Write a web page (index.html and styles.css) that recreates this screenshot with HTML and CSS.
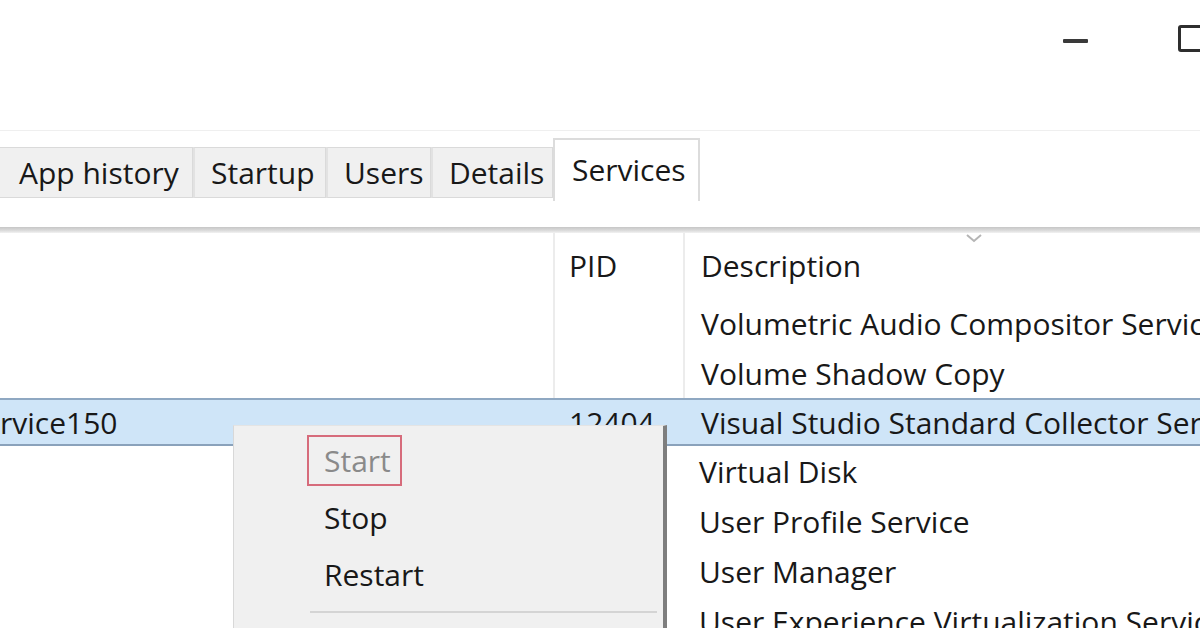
FILE: index.html
```html
<!DOCTYPE html>
<html>
<head>
<meta charset="utf-8">
<title>Task Manager - Services</title>
<link rel="stylesheet" href="styles.css">
</head>
<body>
<div class="window">
  <div class="titlebar">
    <div class="ctrl-min"><span class="dash"></span></div>
    <div class="ctrl-max"><span class="box"></span></div>
  </div>
  <div class="tabstrip">
    <div class="tab t-app">App history</div>
    <div class="tab t-startup">Startup</div>
    <div class="tab t-users">Users</div>
    <div class="tab t-details">Details</div>
    <div class="tab t-services active">Services</div>
  </div>
  <div class="gap"></div>
  <div class="headline"></div>
  <div class="grid">
    <div class="row head sep">
      <div class="cell name"></div>
      <div class="cell pid">PID</div>
      <div class="cell desc">Description
        <svg class="sort" width="16" height="9" viewBox="0 0 16 9"><polyline points="1,1 8,7 15,1" fill="none" stroke="#b5b5b5" stroke-width="2"/></svg>
      </div>
    </div>
    <div class="row sep">
      <div class="cell name"></div>
      <div class="cell pid"></div>
      <div class="cell desc">Volumetric Audio Compositor Service</div>
    </div>
    <div class="row sep">
      <div class="cell name"></div>
      <div class="cell pid"></div>
      <div class="cell desc">Volume Shadow Copy</div>
    </div>
    <div class="row selected">
      <div class="cell name clip">rvice150</div>
      <div class="cell pid">12404</div>
      <div class="cell desc">Visual Studio Standard Collector Service 150</div>
    </div>
    <div class="row">
      <div class="cell name"></div>
      <div class="cell pid"></div>
      <div class="cell desc">Virtual Disk</div>
    </div>
    <div class="row">
      <div class="cell name"></div>
      <div class="cell pid"></div>
      <div class="cell desc">User Profile Service</div>
    </div>
    <div class="row">
      <div class="cell name"></div>
      <div class="cell pid"></div>
      <div class="cell desc">User Manager</div>
    </div>
    <div class="row">
      <div class="cell name"></div>
      <div class="cell pid"></div>
      <div class="cell desc">User Experience Virtualization Service</div>
    </div>
  </div>

  <div class="menu">
    <div class="item disabled"><span class="focus">Start</span></div>
    <div class="item">Stop</div>
    <div class="item">Restart</div>
    <div class="menu-sep"></div>
  </div>
</div>
</body>
</html>
```
FILE: styles.css
```css
* { box-sizing: border-box; }
html, body {
  margin: 0;
  padding: 0;
  width: 1200px;
  height: 628px;
  overflow: hidden;
  background: #ffffff;
}
body {
  font-family: "Open Sans", "Noto Sans", "DejaVu Sans", sans-serif;
  font-size: 30px;
  color: #181818;
}
.window {
  position: relative;
  width: 1200px;
  height: 628px;
  overflow: hidden;
}

/* title bar */
.titlebar {
  height: 130px;
  display: flex;
  align-items: flex-start;
  padding-left: 1063px;
}
.ctrl-min { padding-top: 39px; }
.dash {
  display: block;
  width: 25px;
  height: 4px;
  background: #3a3a3a;
  border-radius: 1px;
}
.ctrl-max { padding-top: 25px; margin-left: 90px; }
.box {
  display: block;
  width: 34px;
  height: 27px;
  border: 3px solid #2e2e2e;
  border-radius: 3px;
}

/* tabs */
.tabstrip {
  height: 70px;
  display: flex;
  align-items: flex-start;
  border-top: 1px solid #efefef;
  padding-top: 7px;
  margin-left: -2px;
}
.tab {
  margin-top: 9px;
  height: 51px;
  line-height: 49px;
  background: #f0f0f0;
  border: 1px solid #dadada;
  border-left: 2px solid #e2e2e2;
  padding-left: 16px;
  white-space: nowrap;
  overflow: hidden;
}
.t-app { width: 195px; padding-left: 19px; }
.t-startup { width: 133px; }
.t-users { width: 105px; }
.t-details { width: 122px; }
.tab.active {
  margin-top: 0;
  height: 63px;
  line-height: 60px;
  width: 147px;
  background: #ffffff;
  border: 2px solid #dcdcdc;
  border-bottom: none;
  padding-left: 17px;
}
.gap { height: 27px; }
.headline {
  height: 6px;
  background: linear-gradient(#c6c6c6, #dcdcdc 60%, #f2f2f2);
}

/* grid */
.grid { display: flex; flex-direction: column; }
.row {
  display: flex;
  height: 50px;
  align-items: stretch;
  white-space: nowrap;
}
.row.head { height: 65px; }
.cell {
  display: flex;
  align-items: center;
  overflow: hidden;
}
.name { width: 553px; }
.pid { width: 130px; padding-left: 14px; }
.desc { flex: 1; padding-left: 16px; position: relative; }
.row.sep .pid { border-left: 2px solid #ececec; }
.row.sep .desc { border-left: 2px solid #ececec; }
.sort {
  position: absolute;
  left: 281px;
  top: 1px;
}
.row.selected {
  height: 48px;
  background: #cfe5f8;
  border-top: 2px solid #8fa8c2;
  border-bottom: 2px solid #8aa2bb;
}
.row.selected .pid { border-left: 2px solid transparent; }
.row.selected .desc { border-left: 2px solid transparent; }
.clip { padding-left: 0; }

/* context menu */
.menu {
  position: absolute;
  left: 233px;
  top: 425px;
  width: 434px;
  height: 230px;
  background: #f0f0f0;
  border-left: 1px solid #d8d8d8;
  border-top: 1px solid #e4e4e4;
  border-right: 4px solid #7e7e7e;
  padding-top: 6px;
  padding-left: 73px;
  padding-right: 6px;
}
.item {
  height: 57px;
  display: flex;
  align-items: center;
  padding-left: 17px;
  color: #181818;
}
.item.disabled { padding-left: 0; color: #8a8a8a; }
.focus {
  display: flex;
  align-items: center;
  width: 95px;
  height: 51px;
  border: 2px solid #d66b7b;
  padding-left: 15px;
}
.menu-sep {
  margin-top: 8px;
  margin-left: 3px;
  height: 2px;
  background: #d4d4d4;
}
```
